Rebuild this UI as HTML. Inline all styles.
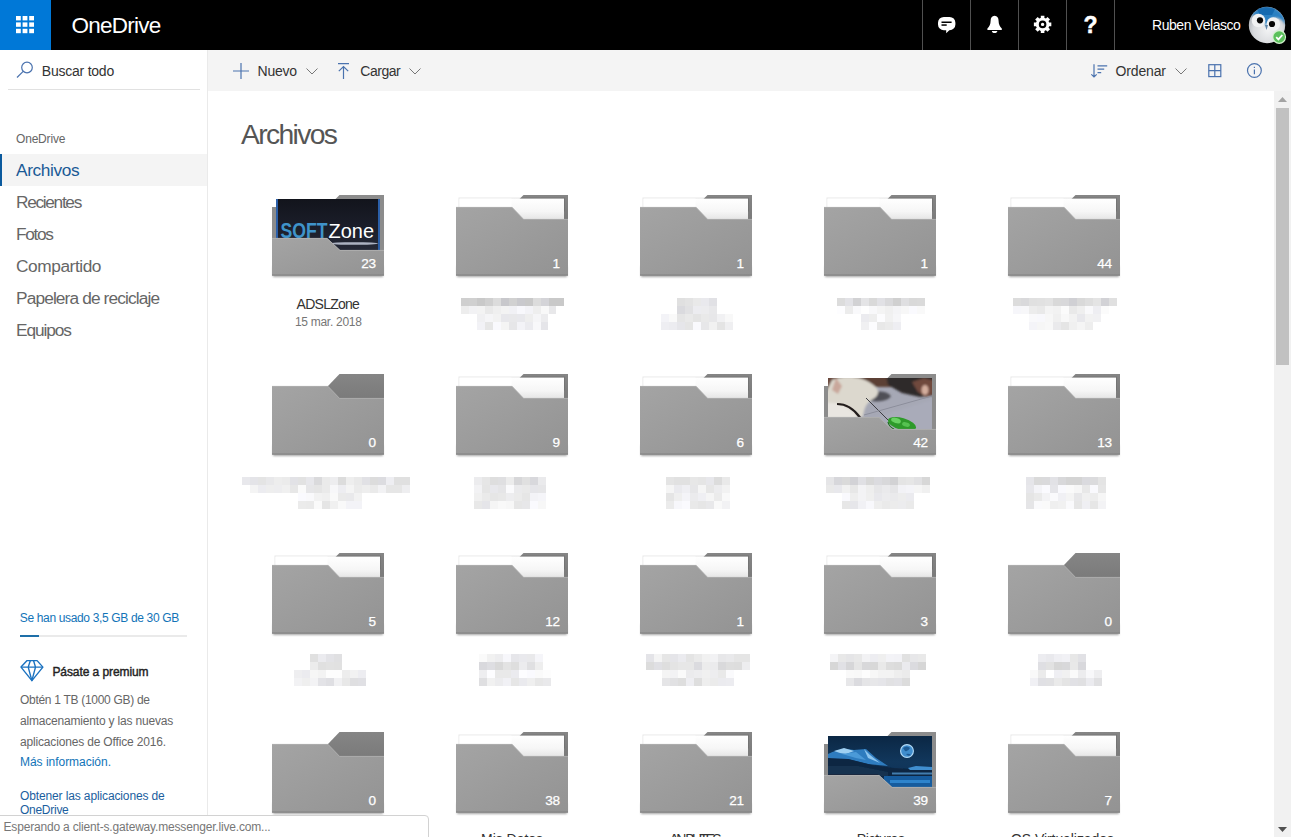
<!DOCTYPE html><html lang="es"><head><meta charset="utf-8"><title>Archivos - OneDrive</title><style>
*{box-sizing:border-box;margin:0;padding:0}
html,body{width:1291px;height:837px;overflow:hidden;background:#fff}
body{font-family:"Liberation Sans",sans-serif;position:relative;color:#333}
.abs{position:absolute}
.t{position:absolute;white-space:nowrap;line-height:1}
#hdr{position:absolute;left:0;top:0;width:1291px;height:50px;background:#000}
#waffle{position:absolute;left:0;top:0;width:51px;height:50px;background:#0078d7}
.div{position:absolute;top:0;width:1px;height:50px;background:#505050}
#side{position:absolute;left:0;top:50px;width:207px;height:787px;background:#fff}
#sideborder{position:absolute;left:207px;top:50px;width:1px;height:787px;background:#eaeaea}
#tool{position:absolute;left:208px;top:50px;width:1083px;height:41px;background:#f4f4f4}
#sb{position:absolute;left:1274px;top:91px;width:17px;height:746px;background:#f1f1f1}
#thumb{position:absolute;left:1276px;top:108px;width:13px;height:257px;background:#c1c1c1}
.nav{position:absolute;left:0;width:207px;height:32px}
.nav span{position:absolute;left:16px;top:7px;font-size:17px;line-height:20px;color:#555;white-space:nowrap}
.nav.sel{background:#f4f4f4;border-left:2px solid #0b5a9e}
.nav.sel span{left:13px;color:#1a5a96}
.folder{position:absolute;width:112px;height:80px;overflow:visible}
.cnt{position:absolute;right:8.300px;top:62.100px;font-size:13.600px;line-height:14px;color:#fff;white-space:nowrap;letter-spacing:-0.300px;-webkit-text-stroke:0.250px #fff}
.blk{position:absolute}
#status{position:absolute;left:-1px;top:815px;width:430px;height:23px;background:#fff;border:1px solid #d2d2d2;border-top-right-radius:4px}
</style></head><body>
<svg width="0" height="0" style="position:absolute"><defs>
<linearGradient id="gf" x1="0" y1="0" x2="1" y2="1"><stop offset="0" stop-color="#a4a4a4"/><stop offset="1" stop-color="#939393"/></linearGradient>
<linearGradient id="gp" x1="0" y1="0" x2="0" y2="1"><stop offset="0" stop-color="#ffffff"/><stop offset="0.6" stop-color="#f6f6f6"/><stop offset="1" stop-color="#e4e4e4"/></linearGradient>
<linearGradient id="gb" x1="0" y1="0" x2="0" y2="1"><stop offset="0" stop-color="#858585"/><stop offset="1" stop-color="#7a7a7a"/></linearGradient>
<linearGradient id="gsz" x1="0" y1="0" x2="0" y2="1"><stop offset="0" stop-color="#12141c"/><stop offset="0.6" stop-color="#1c1f2b"/><stop offset="1" stop-color="#262a38"/></linearGradient>
<linearGradient id="gmoon" x1="0" y1="0" x2="0" y2="1"><stop offset="0" stop-color="#0b2744"/><stop offset="0.5" stop-color="#11375c"/><stop offset="1" stop-color="#0e2f52"/></linearGradient>
<filter id="bl1" x="-20%" y="-20%" width="140%" height="140%"><feGaussianBlur stdDeviation="1.2"/></filter>
<filter id="bl2" x="-20%" y="-20%" width="140%" height="140%"><feGaussianBlur stdDeviation="0.6"/></filter>
<filter id="sh" x="-10%" y="-10%" width="120%" height="130%"><feGaussianBlur stdDeviation="1.3"/></filter>
</defs></svg>
<div id="hdr">
<div id="waffle"><svg class="abs" style="left:16px;top:16px" width="19" height="18" viewBox="0 0 19 18" fill="#fff"><rect x="0.0" y="0.0" width="4.800" height="4.400"/><rect x="6.6" y="0.0" width="4.800" height="4.400"/><rect x="13.2" y="0.0" width="4.800" height="4.400"/><rect x="0.0" y="6.4" width="4.800" height="4.400"/><rect x="6.6" y="6.4" width="4.800" height="4.400"/><rect x="13.2" y="6.4" width="4.800" height="4.400"/><rect x="0.0" y="12.8" width="4.800" height="4.400"/><rect x="6.6" y="12.8" width="4.800" height="4.400"/><rect x="13.2" y="12.8" width="4.800" height="4.400"/></svg></div>
<span class="t" style="left:71.6px;top:14.85px;font-size:22.5px;color:#fff;font-weight:400;letter-spacing:-0.766px;">OneDrive</span>
<div class="div" style="left:922px"></div>
<div class="div" style="left:970px"></div>
<div class="div" style="left:1018px"></div>
<div class="div" style="left:1066px"></div>
<div class="div" style="left:1114px"></div>
<svg class="abs" style="left:937px;top:16px" width="19" height="18" viewBox="0 0 19 18"><path d="M6.800 0.900h5.800A5.800 5.800 0 0 1 18.400 6.700v1.700A5.800 5.800 0 0 1 12.600 14.200H12.300L9.200 17.200V14.200H6.800A5.800 5.800 0 0 1 1 8.400V6.700A5.800 5.800 0 0 1 6.800 0.900z" fill="#fff"/><rect x="4.500" y="5.500" width="10.100" height="1.500" fill="#000"/><rect x="4.500" y="8.300" width="5.200" height="1.500" fill="#000"/></svg>
<svg class="abs" style="left:986px;top:15px" width="17" height="19" viewBox="0 0 17 19"><path d="M8.600 0.800c-2.700 0-4 2.200-4 5.200 0 3.400-1.300 5.600-3.200 7.600v1.400h14.400v-1.400c-1.900-2-3.200-4.200-3.200-7.600 0-3-1.300-5.200-4-5.200z" fill="#fff"/><path d="M5.900 15.900h5.400c0 1.300-1.200 2.100-2.700 2.100s-2.700-.8-2.700-2.100z" fill="#fff"/></svg>
<svg class="abs" style="left:1033px;top:15px" width="19" height="19" viewBox="0 0 19 19"><path d="M15.84 7.59L18.32 7.60L18.32 11.20L15.84 11.21L15.30 12.53L17.04 14.29L14.49 16.84L12.73 15.10L11.41 15.64L11.40 18.12L7.80 18.12L7.79 15.64L6.47 15.10L4.71 16.84L2.16 14.29L3.90 12.53L3.36 11.21L0.88 11.20L0.88 7.60L3.36 7.59L3.90 6.27L2.16 4.51L4.71 1.96L6.47 3.70L7.79 3.16L7.80 0.68L11.40 0.68L11.41 3.16L12.73 3.70L14.49 1.96L17.04 4.51L15.30 6.27Z" fill="#fff"/><circle cx="9.600" cy="9.400" r="6.600" fill="#fff"/><circle cx="9.600" cy="9.400" r="2.750" fill="none" stroke="#000" stroke-width="2.100"/></svg>
<span class="t" style="left:1083.5px;top:14.13px;font-size:23px;color:#fff;font-weight:700;letter-spacing:0px;-webkit-text-stroke:0.500px #fff;">?</span>
<span class="t" style="left:1152.0px;top:18.35px;font-size:14px;color:#fff;font-weight:400;letter-spacing:-0.44px;">Ruben Velasco</span>
<svg class="abs" style="left:1248px;top:6px" width="40" height="40" viewBox="0 0 40 40">
<defs><clipPath id="av"><circle cx="19" cy="19" r="18.200"/></clipPath>
<radialGradient id="avg" cx="0.5" cy="0.6" r="0.6"><stop offset="0" stop-color="#f2f3f4"/><stop offset="0.6" stop-color="#d9dbde"/><stop offset="1" stop-color="#9ea3aa"/></radialGradient></defs>
<g clip-path="url(#av)"><rect width="40" height="40" fill="url(#avg)"/>
<path d="M3 11C7 -2 32 -4 37.500 15L38 19C34 12 28 10 22 13L18.500 21 15 11C11 8 6 8 3 11Z" fill="#2b80c2" filter="url(#bl1)"/>
<path d="M9 3q9-4 18 0l-3 6h-12z" fill="#0d62a8" opacity="0.700" filter="url(#bl2)"/>
<circle cx="10.500" cy="14.500" r="6.800" fill="#f0f1f2"/><circle cx="25.300" cy="18" r="6.800" fill="#f0f1f2"/>
<circle cx="12" cy="14.300" r="3.100" fill="#060606"/><circle cx="24" cy="18" r="3.100" fill="#060606"/>
<path d="M17 19l1.500 5 1.500-5z" fill="#5c84a8"/>
</g>
<circle cx="31.200" cy="31" r="6.900" fill="#d4f2cf"/><circle cx="31.200" cy="31" r="5.800" fill="#5bc05b"/>
<path d="M28.200 31.200l2.200 2.200 3.900-4.400" fill="none" stroke="#fff" stroke-width="1.800"/></svg>
</div>
<div id="side"></div>
<div id="sideborder"></div>
<svg class="abs" style="left:16px;top:61px" width="18" height="18" viewBox="0 0 18 18" fill="none" stroke="#4a72ae" stroke-width="1.200"><circle cx="11" cy="6.500" r="5.300"/><path d="M7.200 10.300L1 16.500"/></svg>
<span class="t" style="left:41.8px;top:64.05px;font-size:14px;color:#333;font-weight:400;letter-spacing:-0.233px;">Buscar todo</span>
<div class="abs" style="left:8px;top:89px;width:192px;height:1px;background:#e1e1e1"></div>
<span class="t" style="left:16.0px;top:133.24px;font-size:12px;color:#666;font-weight:400;letter-spacing:-0.186px;">OneDrive</span>
<div class="nav sel" style="top:154px"></div>
<span class="t" style="left:16.0px;top:162.26px;font-size:17.3px;color:#1a5a96;font-weight:400;letter-spacing:-0.378px;">Archivos</span>
<span class="t" style="left:16.0px;top:194.26px;font-size:17.3px;color:#666;font-weight:400;letter-spacing:-1.318px;">Recientes</span>
<span class="t" style="left:16.0px;top:226.26px;font-size:17.3px;color:#666;font-weight:400;letter-spacing:-1.312px;">Fotos</span>
<span class="t" style="left:16.0px;top:258.26px;font-size:17.3px;color:#666;font-weight:400;letter-spacing:-0.427px;">Compartido</span>
<span class="t" style="left:16.0px;top:290.26px;font-size:17.3px;color:#666;font-weight:400;letter-spacing:-0.869px;">Papelera de reciclaje</span>
<span class="t" style="left:16.0px;top:322.26px;font-size:17.3px;color:#666;font-weight:400;letter-spacing:-1.09px;">Equipos</span>
<span class="t" style="left:19.8px;top:611.84px;font-size:12px;color:#1274b8;font-weight:400;letter-spacing:-0.347px;">Se han usado 3,5 GB de 30 GB</span>
<div class="abs" style="left:20px;top:634.5px;width:167px;height:2px;background:#eaeaea"></div>
<div class="abs" style="left:20px;top:634.5px;width:19px;height:2px;background:#1e6fa8"></div>
<svg class="abs" style="left:20px;top:659px" width="25" height="23" viewBox="-1 -1 25 23" fill="none" stroke="#1b72c0" stroke-width="1.400" stroke-linejoin="round"><path d="M6.100 0.600h10L21.900 7.100 10.900 20.600 0 7.100z"/><path d="M0 7.100h21.900M9.300 0.800L7.200 7.100l3.700 13.500 3.600-13.500-1.900-6.300"/></svg>
<span class="t" style="left:52.4px;top:666.24px;font-size:12px;color:#222;font-weight:400;letter-spacing:-0.079px;-webkit-text-stroke:0.400px #222;">Pásate a premium</span>
<span class="t" style="left:20.0px;top:693.84px;font-size:12px;color:#666;font-weight:400;letter-spacing:-0.297px;">Obtén 1 TB (1000 GB) de</span>
<span class="t" style="left:20.0px;top:714.84px;font-size:12px;color:#666;font-weight:400;letter-spacing:-0.185px;">almacenamiento y las nuevas</span>
<span class="t" style="left:20.0px;top:735.64px;font-size:12px;color:#666;font-weight:400;letter-spacing:-0.168px;">aplicaciones de Office 2016.</span>
<span class="t" style="left:20.0px;top:755.64px;font-size:12px;color:#1274b8;font-weight:400;letter-spacing:-0.025px;">Más información.</span>
<span class="t" style="left:20.0px;top:790.44px;font-size:12px;color:#1b5e9e;font-weight:400;letter-spacing:-0.127px;">Obtener las aplicaciones de</span>
<span class="t" style="left:20.0px;top:804.44px;font-size:12px;color:#1b5e9e;font-weight:400;letter-spacing:-0.271px;">OneDrive</span>
<div id="tool"></div>
<svg class="abs" style="left:233px;top:63px" width="16" height="16" viewBox="0 0 16 16" stroke="#4a72ae" stroke-width="1.200" fill="none"><path d="M8 0v16M0 8h16"/></svg>
<span class="t" style="left:257.6px;top:63.95px;font-size:14px;color:#333;font-weight:400;letter-spacing:-0.265px;">Nuevo</span>
<svg class="abs" style="left:306px;top:68px" width="12" height="7" viewBox="0 0 12 7" fill="none" stroke="#777" stroke-width="1"><path d="M0.500 0.500L6 6l5.500-5.500"/></svg>
<svg class="abs" style="left:338px;top:63px" width="11" height="16" viewBox="0 0 11 16" stroke="#4a72ae" stroke-width="1.200" fill="none"><path d="M0 0.600h11M5.500 3.500v12.500M0.800 8.200L5.500 3.500l4.700 4.700"/></svg>
<span class="t" style="left:360.3px;top:63.95px;font-size:14px;color:#333;font-weight:400;letter-spacing:-0.461px;">Cargar</span>
<svg class="abs" style="left:409px;top:68px" width="12" height="7" viewBox="0 0 12 7" fill="none" stroke="#777" stroke-width="1"><path d="M0.500 0.500L6 6l5.500-5.500"/></svg>
<svg class="abs" style="left:1091px;top:63px" width="17" height="15" viewBox="0 0 17 15" stroke="#4a72ae" stroke-width="1.200" fill="none"><path d="M3 1.300v12.700M0.300 11.300L3 14l2.700-2.700M6.500 2.800h9.700M6.500 6.200h6.700M6.500 9.600h3.700"/></svg>
<span class="t" style="left:1115.6px;top:63.95px;font-size:14px;color:#333;font-weight:400;letter-spacing:-0.174px;">Ordenar</span>
<svg class="abs" style="left:1175px;top:68px" width="12" height="7" viewBox="0 0 12 7" fill="none" stroke="#777" stroke-width="1"><path d="M0.500 0.500L6 6l5.500-5.500"/></svg>
<svg class="abs" style="left:1208px;top:64px" width="14" height="14" viewBox="0 0 14 14" stroke="#4a72ae" stroke-width="1.200" fill="none"><rect x="0.800" y="0.700" width="12" height="11.900"/><path d="M6.800 0.700v11.900M0.800 6.650h12"/></svg>
<svg class="abs" style="left:1246px;top:62px" width="17" height="17" viewBox="0 0 17 17" stroke="#4a72ae" stroke-width="1.200" fill="none"><circle cx="8.400" cy="8.500" r="6.900"/><path d="M8.400 7.400v4.800M8.400 4.800v1.300"/></svg>
<h1 class="t" style="left:240.9px;top:120.34px;font-size:28.3px;color:#555;font-weight:400;letter-spacing:-1.633px;font-weight:400;">Archivos</h1>
<div class="folder" style="left:272px;top:195px"><svg width="112" height="84" viewBox="0 0 112 84" style="position:absolute;left:0;top:0;overflow:visible"><rect x="1" y="71" width="110" height="11" fill="#000" opacity="0.35" filter="url(#sh)"/><path d="M0 12H55.500L67.500 0H112V60H0Z" fill="#8c8c8c"/><rect x="2" y="2" width="108" height="10" fill="#fff" opacity="0.0"/><svg x="4" y="4" width="104" height="52" viewBox="0 0 104 52" overflow="hidden"><rect width="104" height="52" fill="url(#gsz)"/><rect x="0" y="0" width="2" height="52" fill="#2b5fa8"/><rect x="102" y="0" width="2" height="52" fill="#2b5fa8"/><ellipse cx="78" cy="44.500" rx="24" ry="1.300" fill="#cfd6e6" opacity="0.8" filter="url(#bl2)"/><text x="4.500" y="38.500" font-family="Liberation Sans, sans-serif" font-weight="700" font-size="22.600" fill="#3f93c9" textLength="47" lengthAdjust="spacingAndGlyphs">SOFT</text><text x="52.500" y="38.500" font-family="Liberation Sans, sans-serif" font-size="20.500" fill="#fff" textLength="45.500" lengthAdjust="spacingAndGlyphs">Zone</text></svg><path d="M0 43H55L68 55H112V80.600H0Z" fill="url(#gf)"/><path d="M0 43.400H55L68 55.400H112" fill="none" stroke="#b4b4b4" stroke-width="0.800"/><rect x="0" y="79.500" width="112" height="1.100" fill="#828282"/></svg><span class="cnt">23</span></div>
<div class="folder" style="left:456px;top:195px"><svg width="112" height="84" viewBox="0 0 112 84" style="position:absolute;left:0;top:0;overflow:visible"><rect x="1" y="71" width="110" height="11" fill="#000" opacity="0.35" filter="url(#sh)"/><path d="M67.500 0H112V26H56V11.500Z" fill="url(#gb)"/><rect x="2.500" y="2.500" width="106.500" height="14" fill="#000" opacity="0.090" filter="url(#bl2)"/><rect x="3.500" y="3.600" width="104.500" height="21.400" fill="url(#gp)"/><rect x="3.500" y="3.600" width="52" height="9.400" fill="#fff"/><path d="M0 12H56L67.500 24H112V80.600H0Z" fill="url(#gf)"/><path d="M0 12.400H56L67.500 24.400H112" fill="none" stroke="#b0b0b0" stroke-width="0.800"/><rect x="0" y="79.500" width="112" height="1.100" fill="#828282"/></svg><span class="cnt">1</span></div>
<div class="folder" style="left:640px;top:195px"><svg width="112" height="84" viewBox="0 0 112 84" style="position:absolute;left:0;top:0;overflow:visible"><rect x="1" y="71" width="110" height="11" fill="#000" opacity="0.35" filter="url(#sh)"/><path d="M67.500 0H112V26H56V11.500Z" fill="url(#gb)"/><rect x="2.500" y="2.500" width="106.500" height="14" fill="#000" opacity="0.090" filter="url(#bl2)"/><rect x="3.500" y="3.600" width="104.500" height="21.400" fill="url(#gp)"/><rect x="3.500" y="3.600" width="52" height="9.400" fill="#fff"/><path d="M0 12H56L67.500 24H112V80.600H0Z" fill="url(#gf)"/><path d="M0 12.400H56L67.500 24.400H112" fill="none" stroke="#b0b0b0" stroke-width="0.800"/><rect x="0" y="79.500" width="112" height="1.100" fill="#828282"/></svg><span class="cnt">1</span></div>
<div class="folder" style="left:824px;top:195px"><svg width="112" height="84" viewBox="0 0 112 84" style="position:absolute;left:0;top:0;overflow:visible"><rect x="1" y="71" width="110" height="11" fill="#000" opacity="0.35" filter="url(#sh)"/><path d="M67.500 0H112V26H56V11.500Z" fill="url(#gb)"/><rect x="2.500" y="2.500" width="106.500" height="14" fill="#000" opacity="0.090" filter="url(#bl2)"/><rect x="3.500" y="3.600" width="104.500" height="21.400" fill="url(#gp)"/><rect x="3.500" y="3.600" width="52" height="9.400" fill="#fff"/><path d="M0 12H56L67.500 24H112V80.600H0Z" fill="url(#gf)"/><path d="M0 12.400H56L67.500 24.400H112" fill="none" stroke="#b0b0b0" stroke-width="0.800"/><rect x="0" y="79.500" width="112" height="1.100" fill="#828282"/></svg><span class="cnt">1</span></div>
<div class="folder" style="left:1008px;top:195px"><svg width="112" height="84" viewBox="0 0 112 84" style="position:absolute;left:0;top:0;overflow:visible"><rect x="1" y="71" width="110" height="11" fill="#000" opacity="0.35" filter="url(#sh)"/><path d="M67.500 0H112V26H56V11.500Z" fill="url(#gb)"/><rect x="2.500" y="2.500" width="106.500" height="14" fill="#000" opacity="0.090" filter="url(#bl2)"/><rect x="3.500" y="3.600" width="104.500" height="21.400" fill="url(#gp)"/><rect x="3.500" y="3.600" width="52" height="9.400" fill="#fff"/><path d="M0 12H56L67.500 24H112V80.600H0Z" fill="url(#gf)"/><path d="M0 12.400H56L67.500 24.400H112" fill="none" stroke="#b0b0b0" stroke-width="0.800"/><rect x="0" y="79.500" width="112" height="1.100" fill="#828282"/></svg><span class="cnt">44</span></div>
<div class="folder" style="left:272px;top:374px"><svg width="112" height="84" viewBox="0 0 112 84" style="position:absolute;left:0;top:0;overflow:visible"><rect x="1" y="71" width="110" height="11" fill="#000" opacity="0.35" filter="url(#sh)"/><path d="M67.500 0H112V26H56V12Z" fill="url(#gb)"/><path d="M0 12H56L67.500 24H112V80.600H0Z" fill="url(#gf)"/><path d="M0 12.400H56L67.500 24.400H112" fill="none" stroke="#b0b0b0" stroke-width="0.800"/><rect x="0" y="79.500" width="112" height="1.100" fill="#828282"/></svg><span class="cnt">0</span></div>
<div class="folder" style="left:456px;top:374px"><svg width="112" height="84" viewBox="0 0 112 84" style="position:absolute;left:0;top:0;overflow:visible"><rect x="1" y="71" width="110" height="11" fill="#000" opacity="0.35" filter="url(#sh)"/><path d="M67.500 0H112V26H56V11.500Z" fill="url(#gb)"/><rect x="2.500" y="2.500" width="106.500" height="14" fill="#000" opacity="0.090" filter="url(#bl2)"/><rect x="3.500" y="3.600" width="104.500" height="21.400" fill="url(#gp)"/><rect x="3.500" y="3.600" width="52" height="9.400" fill="#fff"/><path d="M0 12H56L67.500 24H112V80.600H0Z" fill="url(#gf)"/><path d="M0 12.400H56L67.500 24.400H112" fill="none" stroke="#b0b0b0" stroke-width="0.800"/><rect x="0" y="79.500" width="112" height="1.100" fill="#828282"/></svg><span class="cnt">9</span></div>
<div class="folder" style="left:640px;top:374px"><svg width="112" height="84" viewBox="0 0 112 84" style="position:absolute;left:0;top:0;overflow:visible"><rect x="1" y="71" width="110" height="11" fill="#000" opacity="0.35" filter="url(#sh)"/><path d="M67.500 0H112V26H56V11.500Z" fill="url(#gb)"/><rect x="2.500" y="2.500" width="106.500" height="14" fill="#000" opacity="0.090" filter="url(#bl2)"/><rect x="3.500" y="3.600" width="104.500" height="21.400" fill="url(#gp)"/><rect x="3.500" y="3.600" width="52" height="9.400" fill="#fff"/><path d="M0 12H56L67.500 24H112V80.600H0Z" fill="url(#gf)"/><path d="M0 12.400H56L67.500 24.400H112" fill="none" stroke="#b0b0b0" stroke-width="0.800"/><rect x="0" y="79.500" width="112" height="1.100" fill="#828282"/></svg><span class="cnt">6</span></div>
<div class="folder" style="left:824px;top:374px"><svg width="112" height="84" viewBox="0 0 112 84" style="position:absolute;left:0;top:0;overflow:visible"><rect x="1" y="71" width="110" height="11" fill="#000" opacity="0.35" filter="url(#sh)"/><path d="M0 12H55.500L67.500 0H112V60H0Z" fill="#8c8c8c"/><rect x="2" y="2" width="108" height="10" fill="#fff" opacity="0.0"/><svg x="4" y="4" width="104" height="52" viewBox="0 0 104 52" overflow="hidden"><rect width="104" height="52" fill="#a6a8b5"/><g filter="url(#bl1)"><rect x="-3" y="-3" width="70" height="12" fill="#5b3f34"/><path d="M58 -3H108V17L92 19 74 15 60 7Z" fill="#2f2b2c"/><path d="M84 4l12-4 12 3v12l-10 4-8-5z" fill="#70493c"/><ellipse cx="97" cy="12" rx="3.500" ry="5" fill="#d3ad9d"/><path d="M36 19c8-7 22-7 27-1-3 6-20 8-27 1z" fill="#4f4f56"/><path d="M-3 -3H4L8 3 0 16-3 16Z" fill="#6b4a3d"/><path d="M4 2C14 -3 32 -3 44 6c8 5 8 11 1 15-7 4-9 10-10 18L-3 40V16Z" fill="#dcd8ce"/><path d="M8 0l6 8-4 8-6-4z" fill="#c9a79b"/><path d="M-3 25c12-1 26 3 33 16H-3Z" fill="#e9e6e1"/><path d="M44 40L104 22V54H40Z" fill="#a9abb9"/></g><path d="M9 26c9 0 17 5 23 13.500" stroke="#241d1b" stroke-width="2.200" fill="none" filter="url(#bl2)"/><path d="M38 20L63 45" stroke="#3c3c42" stroke-width="1" filter="url(#bl2)"/><path d="M36 37L104 18" stroke="#8c8e9b" stroke-width="1" filter="url(#bl2)"/><g filter="url(#bl2)"><ellipse cx="74" cy="46" rx="14.500" ry="6" transform="rotate(16 74 46)" fill="#2e9a2b"/><ellipse cx="68" cy="42.500" rx="5" ry="2.600" transform="rotate(16 68 42.500)" fill="#69d163"/><ellipse cx="78" cy="46.500" rx="4" ry="2.200" transform="rotate(16 78 46.500)" fill="#57c251"/><path d="M60 44q1 5 6 7" stroke="#1d6e1c" stroke-width="1.200" fill="none"/></g></svg><path d="M0 43H55L68 55H112V80.600H0Z" fill="url(#gf)"/><path d="M0 43.400H55L68 55.400H112" fill="none" stroke="#b4b4b4" stroke-width="0.800"/><rect x="0" y="79.500" width="112" height="1.100" fill="#828282"/></svg><span class="cnt">42</span></div>
<div class="folder" style="left:1008px;top:374px"><svg width="112" height="84" viewBox="0 0 112 84" style="position:absolute;left:0;top:0;overflow:visible"><rect x="1" y="71" width="110" height="11" fill="#000" opacity="0.35" filter="url(#sh)"/><path d="M67.500 0H112V26H56V11.500Z" fill="url(#gb)"/><rect x="2.500" y="2.500" width="106.500" height="14" fill="#000" opacity="0.090" filter="url(#bl2)"/><rect x="3.500" y="3.600" width="104.500" height="21.400" fill="url(#gp)"/><rect x="3.500" y="3.600" width="52" height="9.400" fill="#fff"/><path d="M0 12H56L67.500 24H112V80.600H0Z" fill="url(#gf)"/><path d="M0 12.400H56L67.500 24.400H112" fill="none" stroke="#b0b0b0" stroke-width="0.800"/><rect x="0" y="79.500" width="112" height="1.100" fill="#828282"/></svg><span class="cnt">13</span></div>
<div class="folder" style="left:272px;top:553px"><svg width="112" height="84" viewBox="0 0 112 84" style="position:absolute;left:0;top:0;overflow:visible"><rect x="1" y="71" width="110" height="11" fill="#000" opacity="0.35" filter="url(#sh)"/><path d="M67.500 0H112V26H56V11.500Z" fill="url(#gb)"/><rect x="2.500" y="2.500" width="106.500" height="14" fill="#000" opacity="0.090" filter="url(#bl2)"/><rect x="3.500" y="3.600" width="104.500" height="21.400" fill="url(#gp)"/><rect x="3.500" y="3.600" width="52" height="9.400" fill="#fff"/><path d="M0 12H56L67.500 24H112V80.600H0Z" fill="url(#gf)"/><path d="M0 12.400H56L67.500 24.400H112" fill="none" stroke="#b0b0b0" stroke-width="0.800"/><rect x="0" y="79.500" width="112" height="1.100" fill="#828282"/></svg><span class="cnt">5</span></div>
<div class="folder" style="left:456px;top:553px"><svg width="112" height="84" viewBox="0 0 112 84" style="position:absolute;left:0;top:0;overflow:visible"><rect x="1" y="71" width="110" height="11" fill="#000" opacity="0.35" filter="url(#sh)"/><path d="M67.500 0H112V26H56V11.500Z" fill="url(#gb)"/><rect x="2.500" y="2.500" width="106.500" height="14" fill="#000" opacity="0.090" filter="url(#bl2)"/><rect x="3.500" y="3.600" width="104.500" height="21.400" fill="url(#gp)"/><rect x="3.500" y="3.600" width="52" height="9.400" fill="#fff"/><path d="M0 12H56L67.500 24H112V80.600H0Z" fill="url(#gf)"/><path d="M0 12.400H56L67.500 24.400H112" fill="none" stroke="#b0b0b0" stroke-width="0.800"/><rect x="0" y="79.500" width="112" height="1.100" fill="#828282"/></svg><span class="cnt">12</span></div>
<div class="folder" style="left:640px;top:553px"><svg width="112" height="84" viewBox="0 0 112 84" style="position:absolute;left:0;top:0;overflow:visible"><rect x="1" y="71" width="110" height="11" fill="#000" opacity="0.35" filter="url(#sh)"/><path d="M67.500 0H112V26H56V11.500Z" fill="url(#gb)"/><rect x="2.500" y="2.500" width="106.500" height="14" fill="#000" opacity="0.090" filter="url(#bl2)"/><rect x="3.500" y="3.600" width="104.500" height="21.400" fill="url(#gp)"/><rect x="3.500" y="3.600" width="52" height="9.400" fill="#fff"/><path d="M0 12H56L67.500 24H112V80.600H0Z" fill="url(#gf)"/><path d="M0 12.400H56L67.500 24.400H112" fill="none" stroke="#b0b0b0" stroke-width="0.800"/><rect x="0" y="79.500" width="112" height="1.100" fill="#828282"/></svg><span class="cnt">1</span></div>
<div class="folder" style="left:824px;top:553px"><svg width="112" height="84" viewBox="0 0 112 84" style="position:absolute;left:0;top:0;overflow:visible"><rect x="1" y="71" width="110" height="11" fill="#000" opacity="0.35" filter="url(#sh)"/><path d="M67.500 0H112V26H56V11.500Z" fill="url(#gb)"/><rect x="2.500" y="2.500" width="106.500" height="14" fill="#000" opacity="0.090" filter="url(#bl2)"/><rect x="3.500" y="3.600" width="104.500" height="21.400" fill="url(#gp)"/><rect x="3.500" y="3.600" width="52" height="9.400" fill="#fff"/><path d="M0 12H56L67.500 24H112V80.600H0Z" fill="url(#gf)"/><path d="M0 12.400H56L67.500 24.400H112" fill="none" stroke="#b0b0b0" stroke-width="0.800"/><rect x="0" y="79.500" width="112" height="1.100" fill="#828282"/></svg><span class="cnt">3</span></div>
<div class="folder" style="left:1008px;top:553px"><svg width="112" height="84" viewBox="0 0 112 84" style="position:absolute;left:0;top:0;overflow:visible"><rect x="1" y="71" width="110" height="11" fill="#000" opacity="0.35" filter="url(#sh)"/><path d="M67.500 0H112V26H56V12Z" fill="url(#gb)"/><path d="M0 12H56L67.500 24H112V80.600H0Z" fill="url(#gf)"/><path d="M0 12.400H56L67.500 24.400H112" fill="none" stroke="#b0b0b0" stroke-width="0.800"/><rect x="0" y="79.500" width="112" height="1.100" fill="#828282"/></svg><span class="cnt">0</span></div>
<div class="folder" style="left:272px;top:732px"><svg width="112" height="84" viewBox="0 0 112 84" style="position:absolute;left:0;top:0;overflow:visible"><rect x="1" y="71" width="110" height="11" fill="#000" opacity="0.35" filter="url(#sh)"/><path d="M67.500 0H112V26H56V12Z" fill="url(#gb)"/><path d="M0 12H56L67.500 24H112V80.600H0Z" fill="url(#gf)"/><path d="M0 12.400H56L67.500 24.400H112" fill="none" stroke="#b0b0b0" stroke-width="0.800"/><rect x="0" y="79.500" width="112" height="1.100" fill="#828282"/></svg><span class="cnt">0</span></div>
<div class="folder" style="left:456px;top:732px"><svg width="112" height="84" viewBox="0 0 112 84" style="position:absolute;left:0;top:0;overflow:visible"><rect x="1" y="71" width="110" height="11" fill="#000" opacity="0.35" filter="url(#sh)"/><path d="M67.500 0H112V26H56V11.500Z" fill="url(#gb)"/><rect x="2.500" y="2.500" width="106.500" height="14" fill="#000" opacity="0.090" filter="url(#bl2)"/><rect x="3.500" y="3.600" width="104.500" height="21.400" fill="url(#gp)"/><rect x="3.500" y="3.600" width="52" height="9.400" fill="#fff"/><path d="M0 12H56L67.500 24H112V80.600H0Z" fill="url(#gf)"/><path d="M0 12.400H56L67.500 24.400H112" fill="none" stroke="#b0b0b0" stroke-width="0.800"/><rect x="0" y="79.500" width="112" height="1.100" fill="#828282"/></svg><span class="cnt">38</span></div>
<div class="folder" style="left:640px;top:732px"><svg width="112" height="84" viewBox="0 0 112 84" style="position:absolute;left:0;top:0;overflow:visible"><rect x="1" y="71" width="110" height="11" fill="#000" opacity="0.35" filter="url(#sh)"/><path d="M67.500 0H112V26H56V11.500Z" fill="url(#gb)"/><rect x="2.500" y="2.500" width="106.500" height="14" fill="#000" opacity="0.090" filter="url(#bl2)"/><rect x="3.500" y="3.600" width="104.500" height="21.400" fill="url(#gp)"/><rect x="3.500" y="3.600" width="52" height="9.400" fill="#fff"/><path d="M0 12H56L67.500 24H112V80.600H0Z" fill="url(#gf)"/><path d="M0 12.400H56L67.500 24.400H112" fill="none" stroke="#b0b0b0" stroke-width="0.800"/><rect x="0" y="79.500" width="112" height="1.100" fill="#828282"/></svg><span class="cnt">21</span></div>
<div class="folder" style="left:824px;top:732px"><svg width="112" height="84" viewBox="0 0 112 84" style="position:absolute;left:0;top:0;overflow:visible"><rect x="1" y="71" width="110" height="11" fill="#000" opacity="0.35" filter="url(#sh)"/><path d="M0 12H55.500L67.500 0H112V60H0Z" fill="#8c8c8c"/><rect x="2" y="2" width="108" height="10" fill="#fff" opacity="0.0"/><svg x="4" y="4" width="104" height="52" viewBox="0 0 104 52" overflow="hidden"><rect width="104" height="52" fill="url(#gmoon)"/><g filter="url(#bl2)"><path d="M0 18C8 14 16 12 26 14L38 13 48 22 60 30 40 28 20 23 0 23Z" fill="#2f7cbf"/><path d="M6 15l10-3 10 3-8 3-6-1z" fill="#9fd0f2"/><path d="M36 13l6 6 10 8-12-5z" fill="#8cc4ee"/><path d="M14 18l14-2 10 8-10-2z" fill="#4c9ad8"/><path d="M0 22L20 23 44 29 66 32 104 34V41H0Z" fill="#0d2643"/><path d="M0 30L30 30 60 36 60 40 0 40Z" fill="#15324f"/><path d="M0 38H50L62 52H0Z" fill="#0a1e36"/><path d="M80 32l8-2 16 1v3H82z" fill="#3f8fd0"/><rect x="56" y="40" width="48" height="12" fill="#185c9e"/><rect x="62" y="44" width="40" height="3" fill="#2f84cc"/><rect x="64" y="36.500" width="40" height="2" fill="#5aa2dc" opacity="0.700"/></g><circle cx="79" cy="15" r="6.600" fill="#3f8ccc"/><circle cx="79" cy="15" r="6.400" fill="none" stroke="#b4daf5" stroke-width="1.100"/><path d="M75 12q4-3 7 0-2 4-5 3zM78 18q3-1 5 1-3 2-5-1z" fill="#1d5a94" filter="url(#bl2)"/></svg><path d="M0 43H55L68 55H112V80.600H0Z" fill="url(#gf)"/><path d="M0 43.400H55L68 55.400H112" fill="none" stroke="#b4b4b4" stroke-width="0.800"/><rect x="0" y="79.500" width="112" height="1.100" fill="#828282"/></svg><span class="cnt">39</span></div>
<div class="folder" style="left:1008px;top:732px"><svg width="112" height="84" viewBox="0 0 112 84" style="position:absolute;left:0;top:0;overflow:visible"><rect x="1" y="71" width="110" height="11" fill="#000" opacity="0.35" filter="url(#sh)"/><path d="M67.500 0H112V26H56V11.500Z" fill="url(#gb)"/><rect x="2.500" y="2.500" width="106.500" height="14" fill="#000" opacity="0.090" filter="url(#bl2)"/><rect x="3.500" y="3.600" width="104.500" height="21.400" fill="url(#gp)"/><rect x="3.500" y="3.600" width="52" height="9.400" fill="#fff"/><path d="M0 12H56L67.500 24H112V80.600H0Z" fill="url(#gf)"/><path d="M0 12.400H56L67.500 24.400H112" fill="none" stroke="#b0b0b0" stroke-width="0.800"/><rect x="0" y="79.500" width="112" height="1.100" fill="#828282"/></svg><span class="cnt">7</span></div>
<span class="t" style="left:296.6px;top:296.95px;font-size:14px;color:#333;font-weight:400;letter-spacing:-0.742px;">ADSLZone</span>
<span class="t" style="left:294.9px;top:316.24px;font-size:12px;color:#767676;font-weight:400;letter-spacing:-0.277px;">15 mar. 2018</span>
<div aria-hidden="true"><i class="blk" style="left:461px;top:298px;width:8px;height:8px;background:rgb(207,207,207)"></i><i class="blk" style="left:469px;top:298px;width:8px;height:8px;background:rgb(208,208,208)"></i><i class="blk" style="left:477px;top:298px;width:8px;height:8px;background:rgb(201,201,201)"></i><i class="blk" style="left:485px;top:298px;width:8px;height:8px;background:rgb(208,208,208)"></i><i class="blk" style="left:493px;top:298px;width:8px;height:8px;background:rgb(220,220,220)"></i><i class="blk" style="left:501px;top:298px;width:8px;height:8px;background:rgb(200,200,204)"></i><i class="blk" style="left:509px;top:298px;width:8px;height:8px;background:rgb(209,209,209)"></i><i class="blk" style="left:517px;top:298px;width:8px;height:8px;background:rgb(201,201,205)"></i><i class="blk" style="left:525px;top:298px;width:8px;height:8px;background:rgb(201,201,201)"></i><i class="blk" style="left:533px;top:298px;width:8px;height:8px;background:rgb(220,220,220)"></i><i class="blk" style="left:541px;top:298px;width:8px;height:8px;background:rgb(212,212,216)"></i><i class="blk" style="left:549px;top:298px;width:8px;height:8px;background:rgb(201,201,201)"></i><i class="blk" style="left:557px;top:298px;width:7px;height:8px;background:rgb(201,201,201)"></i><i class="blk" style="left:461px;top:306px;width:8px;height:8px;background:rgb(237,237,237)"></i><i class="blk" style="left:469px;top:306px;width:8px;height:8px;background:rgb(242,242,244)"></i><i class="blk" style="left:477px;top:306px;width:8px;height:8px;background:rgb(243,243,243)"></i><i class="blk" style="left:485px;top:306px;width:8px;height:8px;background:rgb(233,233,233)"></i><i class="blk" style="left:493px;top:306px;width:8px;height:8px;background:rgb(239,239,239)"></i><i class="blk" style="left:501px;top:306px;width:8px;height:8px;background:rgb(243,243,243)"></i><i class="blk" style="left:509px;top:306px;width:8px;height:8px;background:rgb(241,241,245)"></i><i class="blk" style="left:517px;top:306px;width:8px;height:8px;background:rgb(248,248,252)"></i><i class="blk" style="left:525px;top:306px;width:8px;height:8px;background:rgb(243,243,247)"></i><i class="blk" style="left:533px;top:306px;width:8px;height:8px;background:rgb(238,238,238)"></i><i class="blk" style="left:541px;top:306px;width:8px;height:8px;background:rgb(248,248,248)"></i><i class="blk" style="left:549px;top:306px;width:7px;height:8px;background:rgb(232,232,234)"></i><i class="blk" style="left:477px;top:314px;width:8px;height:8px;background:rgb(240,240,242)"></i><i class="blk" style="left:485px;top:314px;width:8px;height:8px;background:rgb(245,245,247)"></i><i class="blk" style="left:493px;top:314px;width:8px;height:8px;background:rgb(242,242,242)"></i><i class="blk" style="left:501px;top:314px;width:8px;height:8px;background:rgb(231,231,235)"></i><i class="blk" style="left:509px;top:314px;width:8px;height:8px;background:rgb(232,232,234)"></i><i class="blk" style="left:517px;top:314px;width:8px;height:8px;background:rgb(232,232,236)"></i><i class="blk" style="left:525px;top:314px;width:8px;height:8px;background:rgb(238,238,238)"></i><i class="blk" style="left:533px;top:314px;width:8px;height:8px;background:rgb(245,245,247)"></i><i class="blk" style="left:541px;top:314px;width:7px;height:8px;background:rgb(236,236,238)"></i><i class="blk" style="left:477px;top:322px;width:8px;height:8px;background:rgb(242,242,246)"></i><i class="blk" style="left:485px;top:322px;width:8px;height:8px;background:rgb(230,230,230)"></i><i class="blk" style="left:493px;top:322px;width:8px;height:8px;background:rgb(249,249,253)"></i><i class="blk" style="left:501px;top:322px;width:8px;height:8px;background:rgb(244,244,244)"></i><i class="blk" style="left:509px;top:322px;width:8px;height:8px;background:rgb(230,230,232)"></i><i class="blk" style="left:517px;top:322px;width:8px;height:8px;background:rgb(243,243,247)"></i><i class="blk" style="left:525px;top:322px;width:8px;height:8px;background:rgb(235,235,239)"></i><i class="blk" style="left:533px;top:322px;width:8px;height:8px;background:rgb(248,248,250)"></i><i class="blk" style="left:541px;top:322px;width:7px;height:8px;background:rgb(229,229,233)"></i><i class="blk" style="left:677px;top:298px;width:8px;height:8px;background:rgb(224,224,224)"></i><i class="blk" style="left:685px;top:298px;width:8px;height:8px;background:rgb(227,227,227)"></i><i class="blk" style="left:693px;top:298px;width:8px;height:8px;background:rgb(233,233,233)"></i><i class="blk" style="left:701px;top:298px;width:8px;height:8px;background:rgb(233,233,237)"></i><i class="blk" style="left:709px;top:298px;width:8px;height:8px;background:rgb(225,225,229)"></i><i class="blk" style="left:677px;top:306px;width:8px;height:8px;background:rgb(218,218,222)"></i><i class="blk" style="left:685px;top:306px;width:8px;height:8px;background:rgb(225,225,227)"></i><i class="blk" style="left:693px;top:306px;width:8px;height:8px;background:rgb(236,236,240)"></i><i class="blk" style="left:701px;top:306px;width:8px;height:8px;background:rgb(236,236,238)"></i><i class="blk" style="left:709px;top:306px;width:8px;height:8px;background:rgb(232,232,234)"></i><i class="blk" style="left:661px;top:314px;width:8px;height:8px;background:rgb(243,243,247)"></i><i class="blk" style="left:669px;top:314px;width:8px;height:8px;background:rgb(249,249,249)"></i><i class="blk" style="left:677px;top:314px;width:8px;height:8px;background:rgb(229,229,229)"></i><i class="blk" style="left:685px;top:314px;width:8px;height:8px;background:rgb(233,233,233)"></i><i class="blk" style="left:693px;top:314px;width:8px;height:8px;background:rgb(228,228,228)"></i><i class="blk" style="left:701px;top:314px;width:8px;height:8px;background:rgb(233,233,233)"></i><i class="blk" style="left:709px;top:314px;width:8px;height:8px;background:rgb(231,231,233)"></i><i class="blk" style="left:717px;top:314px;width:8px;height:8px;background:rgb(241,241,243)"></i><i class="blk" style="left:725px;top:314px;width:8px;height:8px;background:rgb(248,248,248)"></i><i class="blk" style="left:661px;top:322px;width:8px;height:8px;background:rgb(238,238,242)"></i><i class="blk" style="left:669px;top:322px;width:8px;height:8px;background:rgb(236,236,240)"></i><i class="blk" style="left:677px;top:322px;width:8px;height:8px;background:rgb(230,230,234)"></i><i class="blk" style="left:685px;top:322px;width:8px;height:8px;background:rgb(229,229,229)"></i><i class="blk" style="left:693px;top:322px;width:8px;height:8px;background:rgb(249,249,253)"></i><i class="blk" style="left:701px;top:322px;width:8px;height:8px;background:rgb(231,231,233)"></i><i class="blk" style="left:709px;top:322px;width:8px;height:8px;background:rgb(241,241,241)"></i><i class="blk" style="left:717px;top:322px;width:8px;height:8px;background:rgb(228,228,228)"></i><i class="blk" style="left:725px;top:322px;width:8px;height:8px;background:rgb(239,239,241)"></i><i class="blk" style="left:837px;top:298px;width:8px;height:8px;background:rgb(220,220,220)"></i><i class="blk" style="left:845px;top:298px;width:8px;height:8px;background:rgb(226,226,230)"></i><i class="blk" style="left:853px;top:298px;width:8px;height:8px;background:rgb(210,210,212)"></i><i class="blk" style="left:861px;top:298px;width:8px;height:8px;background:rgb(228,228,230)"></i><i class="blk" style="left:869px;top:298px;width:8px;height:8px;background:rgb(217,217,217)"></i><i class="blk" style="left:877px;top:298px;width:8px;height:8px;background:rgb(225,225,229)"></i><i class="blk" style="left:885px;top:298px;width:8px;height:8px;background:rgb(217,217,219)"></i><i class="blk" style="left:893px;top:298px;width:8px;height:8px;background:rgb(208,208,208)"></i><i class="blk" style="left:901px;top:298px;width:8px;height:8px;background:rgb(223,223,225)"></i><i class="blk" style="left:909px;top:298px;width:8px;height:8px;background:rgb(217,217,217)"></i><i class="blk" style="left:917px;top:298px;width:8px;height:8px;background:rgb(218,218,218)"></i><i class="blk" style="left:837px;top:306px;width:8px;height:8px;background:rgb(253,253,255)"></i><i class="blk" style="left:845px;top:306px;width:8px;height:8px;background:rgb(236,236,236)"></i><i class="blk" style="left:853px;top:306px;width:8px;height:8px;background:rgb(249,249,251)"></i><i class="blk" style="left:861px;top:306px;width:8px;height:8px;background:rgb(254,254,254)"></i><i class="blk" style="left:869px;top:306px;width:8px;height:8px;background:rgb(248,248,250)"></i><i class="blk" style="left:877px;top:306px;width:8px;height:8px;background:rgb(244,244,244)"></i><i class="blk" style="left:885px;top:306px;width:8px;height:8px;background:rgb(240,240,240)"></i><i class="blk" style="left:893px;top:306px;width:8px;height:8px;background:rgb(244,244,246)"></i><i class="blk" style="left:901px;top:306px;width:8px;height:8px;background:rgb(247,247,247)"></i><i class="blk" style="left:909px;top:306px;width:8px;height:8px;background:rgb(250,250,254)"></i><i class="blk" style="left:917px;top:306px;width:8px;height:8px;background:rgb(249,249,249)"></i><i class="blk" style="left:861px;top:314px;width:8px;height:8px;background:rgb(235,235,239)"></i><i class="blk" style="left:869px;top:314px;width:8px;height:8px;background:rgb(238,238,238)"></i><i class="blk" style="left:877px;top:314px;width:8px;height:8px;background:rgb(252,252,254)"></i><i class="blk" style="left:885px;top:314px;width:8px;height:8px;background:rgb(241,241,241)"></i><i class="blk" style="left:893px;top:314px;width:8px;height:8px;background:rgb(246,246,248)"></i><i class="blk" style="left:861px;top:322px;width:8px;height:8px;background:rgb(240,240,242)"></i><i class="blk" style="left:869px;top:322px;width:8px;height:8px;background:rgb(252,252,254)"></i><i class="blk" style="left:877px;top:322px;width:8px;height:8px;background:rgb(232,232,232)"></i><i class="blk" style="left:885px;top:322px;width:8px;height:8px;background:rgb(235,235,235)"></i><i class="blk" style="left:893px;top:322px;width:8px;height:8px;background:rgb(238,238,242)"></i><i class="blk" style="left:1013px;top:298px;width:8px;height:8px;background:rgb(220,220,220)"></i><i class="blk" style="left:1021px;top:298px;width:8px;height:8px;background:rgb(217,217,219)"></i><i class="blk" style="left:1029px;top:298px;width:8px;height:8px;background:rgb(224,224,224)"></i><i class="blk" style="left:1037px;top:298px;width:8px;height:8px;background:rgb(225,225,225)"></i><i class="blk" style="left:1045px;top:298px;width:8px;height:8px;background:rgb(227,227,227)"></i><i class="blk" style="left:1053px;top:298px;width:8px;height:8px;background:rgb(217,217,217)"></i><i class="blk" style="left:1061px;top:298px;width:8px;height:8px;background:rgb(216,216,218)"></i><i class="blk" style="left:1069px;top:298px;width:8px;height:8px;background:rgb(208,208,212)"></i><i class="blk" style="left:1077px;top:298px;width:8px;height:8px;background:rgb(217,217,217)"></i><i class="blk" style="left:1085px;top:298px;width:8px;height:8px;background:rgb(222,222,222)"></i><i class="blk" style="left:1093px;top:298px;width:8px;height:8px;background:rgb(228,228,228)"></i><i class="blk" style="left:1101px;top:298px;width:8px;height:8px;background:rgb(210,210,214)"></i><i class="blk" style="left:1109px;top:298px;width:8px;height:8px;background:rgb(224,224,224)"></i><i class="blk" style="left:1013px;top:306px;width:8px;height:8px;background:rgb(246,246,250)"></i><i class="blk" style="left:1021px;top:306px;width:8px;height:8px;background:rgb(247,247,249)"></i><i class="blk" style="left:1029px;top:306px;width:8px;height:8px;background:rgb(236,236,236)"></i><i class="blk" style="left:1037px;top:306px;width:8px;height:8px;background:rgb(233,233,233)"></i><i class="blk" style="left:1045px;top:306px;width:8px;height:8px;background:rgb(244,244,244)"></i><i class="blk" style="left:1053px;top:306px;width:8px;height:8px;background:rgb(242,242,242)"></i><i class="blk" style="left:1061px;top:306px;width:8px;height:8px;background:rgb(251,251,251)"></i><i class="blk" style="left:1069px;top:306px;width:8px;height:8px;background:rgb(233,233,233)"></i><i class="blk" style="left:1077px;top:306px;width:8px;height:8px;background:rgb(239,239,239)"></i><i class="blk" style="left:1085px;top:306px;width:8px;height:8px;background:rgb(249,249,251)"></i><i class="blk" style="left:1093px;top:306px;width:8px;height:8px;background:rgb(238,238,242)"></i><i class="blk" style="left:1101px;top:306px;width:8px;height:8px;background:rgb(251,251,251)"></i><i class="blk" style="left:1029px;top:314px;width:8px;height:8px;background:rgb(249,249,251)"></i><i class="blk" style="left:1037px;top:314px;width:8px;height:8px;background:rgb(248,248,252)"></i><i class="blk" style="left:1045px;top:314px;width:8px;height:8px;background:rgb(247,247,247)"></i><i class="blk" style="left:1053px;top:314px;width:8px;height:8px;background:rgb(240,240,240)"></i><i class="blk" style="left:1061px;top:314px;width:8px;height:8px;background:rgb(248,248,248)"></i><i class="blk" style="left:1069px;top:314px;width:8px;height:8px;background:rgb(242,242,242)"></i><i class="blk" style="left:1077px;top:314px;width:8px;height:8px;background:rgb(232,232,236)"></i><i class="blk" style="left:1085px;top:314px;width:8px;height:8px;background:rgb(242,242,242)"></i><i class="blk" style="left:1093px;top:314px;width:8px;height:8px;background:rgb(241,241,243)"></i><i class="blk" style="left:1029px;top:322px;width:8px;height:8px;background:rgb(244,244,248)"></i><i class="blk" style="left:1037px;top:322px;width:8px;height:8px;background:rgb(246,246,246)"></i><i class="blk" style="left:1045px;top:322px;width:8px;height:8px;background:rgb(248,248,248)"></i><i class="blk" style="left:1053px;top:322px;width:8px;height:8px;background:rgb(234,234,236)"></i><i class="blk" style="left:1061px;top:322px;width:8px;height:8px;background:rgb(229,229,229)"></i><i class="blk" style="left:1069px;top:322px;width:8px;height:8px;background:rgb(240,240,240)"></i><i class="blk" style="left:1077px;top:322px;width:8px;height:8px;background:rgb(245,245,245)"></i><i class="blk" style="left:1085px;top:322px;width:8px;height:8px;background:rgb(238,238,238)"></i><i class="blk" style="left:242px;top:477px;width:8px;height:8px;background:rgb(232,232,236)"></i><i class="blk" style="left:250px;top:477px;width:8px;height:8px;background:rgb(228,228,232)"></i><i class="blk" style="left:258px;top:477px;width:8px;height:8px;background:rgb(228,228,228)"></i><i class="blk" style="left:266px;top:477px;width:8px;height:8px;background:rgb(232,232,234)"></i><i class="blk" style="left:274px;top:477px;width:8px;height:8px;background:rgb(237,237,237)"></i><i class="blk" style="left:282px;top:477px;width:8px;height:8px;background:rgb(235,235,235)"></i><i class="blk" style="left:290px;top:477px;width:8px;height:8px;background:rgb(226,226,230)"></i><i class="blk" style="left:298px;top:477px;width:8px;height:8px;background:rgb(226,226,226)"></i><i class="blk" style="left:306px;top:477px;width:8px;height:8px;background:rgb(231,231,235)"></i><i class="blk" style="left:314px;top:477px;width:8px;height:8px;background:rgb(218,218,220)"></i><i class="blk" style="left:322px;top:477px;width:8px;height:8px;background:rgb(234,234,234)"></i><i class="blk" style="left:330px;top:477px;width:8px;height:8px;background:rgb(237,237,239)"></i><i class="blk" style="left:338px;top:477px;width:8px;height:8px;background:rgb(220,220,220)"></i><i class="blk" style="left:346px;top:477px;width:8px;height:8px;background:rgb(238,238,238)"></i><i class="blk" style="left:354px;top:477px;width:8px;height:8px;background:rgb(233,233,233)"></i><i class="blk" style="left:362px;top:477px;width:8px;height:8px;background:rgb(225,225,229)"></i><i class="blk" style="left:370px;top:477px;width:8px;height:8px;background:rgb(220,220,220)"></i><i class="blk" style="left:378px;top:477px;width:8px;height:8px;background:rgb(220,220,224)"></i><i class="blk" style="left:386px;top:477px;width:8px;height:8px;background:rgb(238,238,242)"></i><i class="blk" style="left:394px;top:477px;width:8px;height:8px;background:rgb(224,224,224)"></i><i class="blk" style="left:402px;top:477px;width:8px;height:8px;background:rgb(224,224,224)"></i><i class="blk" style="left:250px;top:485px;width:8px;height:8px;background:rgb(244,244,244)"></i><i class="blk" style="left:258px;top:485px;width:8px;height:8px;background:rgb(236,236,240)"></i><i class="blk" style="left:266px;top:485px;width:8px;height:8px;background:rgb(238,238,238)"></i><i class="blk" style="left:274px;top:485px;width:8px;height:8px;background:rgb(237,237,239)"></i><i class="blk" style="left:282px;top:485px;width:8px;height:8px;background:rgb(240,240,240)"></i><i class="blk" style="left:290px;top:485px;width:8px;height:8px;background:rgb(231,231,231)"></i><i class="blk" style="left:298px;top:485px;width:8px;height:8px;background:rgb(250,250,250)"></i><i class="blk" style="left:306px;top:485px;width:8px;height:8px;background:rgb(230,230,232)"></i><i class="blk" style="left:314px;top:485px;width:8px;height:8px;background:rgb(229,229,229)"></i><i class="blk" style="left:322px;top:485px;width:8px;height:8px;background:rgb(234,234,234)"></i><i class="blk" style="left:330px;top:485px;width:8px;height:8px;background:rgb(247,247,249)"></i><i class="blk" style="left:338px;top:485px;width:8px;height:8px;background:rgb(237,237,241)"></i><i class="blk" style="left:346px;top:485px;width:8px;height:8px;background:rgb(244,244,244)"></i><i class="blk" style="left:354px;top:485px;width:8px;height:8px;background:rgb(235,235,235)"></i><i class="blk" style="left:362px;top:485px;width:8px;height:8px;background:rgb(238,238,238)"></i><i class="blk" style="left:370px;top:485px;width:8px;height:8px;background:rgb(234,234,234)"></i><i class="blk" style="left:378px;top:485px;width:8px;height:8px;background:rgb(242,242,244)"></i><i class="blk" style="left:386px;top:485px;width:8px;height:8px;background:rgb(230,230,230)"></i><i class="blk" style="left:394px;top:485px;width:8px;height:8px;background:rgb(230,230,230)"></i><i class="blk" style="left:402px;top:485px;width:8px;height:8px;background:rgb(238,238,240)"></i><i class="blk" style="left:298px;top:493px;width:8px;height:8px;background:rgb(250,250,254)"></i><i class="blk" style="left:306px;top:493px;width:8px;height:8px;background:rgb(249,249,251)"></i><i class="blk" style="left:314px;top:493px;width:8px;height:8px;background:rgb(242,242,242)"></i><i class="blk" style="left:322px;top:493px;width:8px;height:8px;background:rgb(240,240,240)"></i><i class="blk" style="left:330px;top:493px;width:8px;height:8px;background:rgb(249,249,249)"></i><i class="blk" style="left:338px;top:493px;width:8px;height:8px;background:rgb(234,234,234)"></i><i class="blk" style="left:346px;top:493px;width:8px;height:8px;background:rgb(233,233,235)"></i><i class="blk" style="left:354px;top:493px;width:8px;height:8px;background:rgb(242,242,242)"></i><i class="blk" style="left:298px;top:501px;width:8px;height:8px;background:rgb(235,235,235)"></i><i class="blk" style="left:306px;top:501px;width:8px;height:8px;background:rgb(234,234,234)"></i><i class="blk" style="left:314px;top:501px;width:8px;height:8px;background:rgb(250,250,250)"></i><i class="blk" style="left:322px;top:501px;width:8px;height:8px;background:rgb(229,229,229)"></i><i class="blk" style="left:330px;top:501px;width:8px;height:8px;background:rgb(240,240,240)"></i><i class="blk" style="left:338px;top:501px;width:8px;height:8px;background:rgb(249,249,249)"></i><i class="blk" style="left:346px;top:501px;width:8px;height:8px;background:rgb(243,243,247)"></i><i class="blk" style="left:354px;top:501px;width:8px;height:8px;background:rgb(243,243,247)"></i><i class="blk" style="left:474px;top:477px;width:8px;height:8px;background:rgb(236,236,238)"></i><i class="blk" style="left:482px;top:477px;width:8px;height:8px;background:rgb(230,230,230)"></i><i class="blk" style="left:490px;top:477px;width:8px;height:8px;background:rgb(222,222,222)"></i><i class="blk" style="left:498px;top:477px;width:8px;height:8px;background:rgb(223,223,225)"></i><i class="blk" style="left:506px;top:477px;width:8px;height:8px;background:rgb(236,236,236)"></i><i class="blk" style="left:514px;top:477px;width:8px;height:8px;background:rgb(215,215,217)"></i><i class="blk" style="left:522px;top:477px;width:8px;height:8px;background:rgb(224,224,224)"></i><i class="blk" style="left:530px;top:477px;width:8px;height:8px;background:rgb(216,216,220)"></i><i class="blk" style="left:538px;top:477px;width:8px;height:8px;background:rgb(234,234,236)"></i><i class="blk" style="left:474px;top:485px;width:8px;height:8px;background:rgb(242,242,244)"></i><i class="blk" style="left:482px;top:485px;width:8px;height:8px;background:rgb(229,229,229)"></i><i class="blk" style="left:490px;top:485px;width:8px;height:8px;background:rgb(232,232,236)"></i><i class="blk" style="left:498px;top:485px;width:8px;height:8px;background:rgb(229,229,231)"></i><i class="blk" style="left:506px;top:485px;width:8px;height:8px;background:rgb(250,250,252)"></i><i class="blk" style="left:514px;top:485px;width:8px;height:8px;background:rgb(234,234,236)"></i><i class="blk" style="left:522px;top:485px;width:8px;height:8px;background:rgb(233,233,233)"></i><i class="blk" style="left:530px;top:485px;width:8px;height:8px;background:rgb(229,229,233)"></i><i class="blk" style="left:538px;top:485px;width:8px;height:8px;background:rgb(230,230,232)"></i><i class="blk" style="left:474px;top:493px;width:8px;height:8px;background:rgb(240,240,240)"></i><i class="blk" style="left:482px;top:493px;width:8px;height:8px;background:rgb(234,234,234)"></i><i class="blk" style="left:490px;top:493px;width:8px;height:8px;background:rgb(230,230,230)"></i><i class="blk" style="left:498px;top:493px;width:8px;height:8px;background:rgb(232,232,232)"></i><i class="blk" style="left:506px;top:493px;width:8px;height:8px;background:rgb(237,237,239)"></i><i class="blk" style="left:514px;top:493px;width:8px;height:8px;background:rgb(235,235,235)"></i><i class="blk" style="left:522px;top:493px;width:8px;height:8px;background:rgb(230,230,230)"></i><i class="blk" style="left:530px;top:493px;width:8px;height:8px;background:rgb(243,243,247)"></i><i class="blk" style="left:538px;top:493px;width:8px;height:8px;background:rgb(245,245,249)"></i><i class="blk" style="left:474px;top:501px;width:8px;height:8px;background:rgb(232,232,232)"></i><i class="blk" style="left:482px;top:501px;width:8px;height:8px;background:rgb(229,229,233)"></i><i class="blk" style="left:490px;top:501px;width:8px;height:8px;background:rgb(245,245,245)"></i><i class="blk" style="left:498px;top:501px;width:8px;height:8px;background:rgb(249,249,249)"></i><i class="blk" style="left:506px;top:501px;width:8px;height:8px;background:rgb(247,247,247)"></i><i class="blk" style="left:514px;top:501px;width:8px;height:8px;background:rgb(230,230,230)"></i><i class="blk" style="left:522px;top:501px;width:8px;height:8px;background:rgb(231,231,233)"></i><i class="blk" style="left:530px;top:501px;width:8px;height:8px;background:rgb(250,250,254)"></i><i class="blk" style="left:538px;top:501px;width:8px;height:8px;background:rgb(247,247,247)"></i><i class="blk" style="left:666px;top:477px;width:8px;height:8px;background:rgb(228,228,228)"></i><i class="blk" style="left:674px;top:477px;width:8px;height:8px;background:rgb(225,225,225)"></i><i class="blk" style="left:682px;top:477px;width:8px;height:8px;background:rgb(225,225,225)"></i><i class="blk" style="left:690px;top:477px;width:8px;height:8px;background:rgb(231,231,231)"></i><i class="blk" style="left:698px;top:477px;width:8px;height:8px;background:rgb(229,229,229)"></i><i class="blk" style="left:706px;top:477px;width:8px;height:8px;background:rgb(231,231,235)"></i><i class="blk" style="left:714px;top:477px;width:8px;height:8px;background:rgb(220,220,220)"></i><i class="blk" style="left:722px;top:477px;width:8px;height:8px;background:rgb(233,233,233)"></i><i class="blk" style="left:666px;top:485px;width:8px;height:8px;background:rgb(245,245,245)"></i><i class="blk" style="left:674px;top:485px;width:8px;height:8px;background:rgb(234,234,238)"></i><i class="blk" style="left:682px;top:485px;width:8px;height:8px;background:rgb(239,239,243)"></i><i class="blk" style="left:690px;top:485px;width:8px;height:8px;background:rgb(230,230,232)"></i><i class="blk" style="left:698px;top:485px;width:8px;height:8px;background:rgb(245,245,245)"></i><i class="blk" style="left:706px;top:485px;width:8px;height:8px;background:rgb(230,230,230)"></i><i class="blk" style="left:714px;top:485px;width:8px;height:8px;background:rgb(236,236,238)"></i><i class="blk" style="left:722px;top:485px;width:8px;height:8px;background:rgb(242,242,242)"></i><i class="blk" style="left:666px;top:493px;width:8px;height:8px;background:rgb(229,229,229)"></i><i class="blk" style="left:674px;top:493px;width:8px;height:8px;background:rgb(239,239,239)"></i><i class="blk" style="left:682px;top:493px;width:8px;height:8px;background:rgb(244,244,248)"></i><i class="blk" style="left:690px;top:493px;width:8px;height:8px;background:rgb(235,235,237)"></i><i class="blk" style="left:698px;top:493px;width:8px;height:8px;background:rgb(239,239,243)"></i><i class="blk" style="left:706px;top:493px;width:8px;height:8px;background:rgb(245,245,245)"></i><i class="blk" style="left:714px;top:493px;width:8px;height:8px;background:rgb(235,235,235)"></i><i class="blk" style="left:722px;top:493px;width:8px;height:8px;background:rgb(249,249,249)"></i><i class="blk" style="left:666px;top:501px;width:8px;height:8px;background:rgb(235,235,235)"></i><i class="blk" style="left:674px;top:501px;width:8px;height:8px;background:rgb(247,247,251)"></i><i class="blk" style="left:682px;top:501px;width:8px;height:8px;background:rgb(250,250,254)"></i><i class="blk" style="left:690px;top:501px;width:8px;height:8px;background:rgb(233,233,233)"></i><i class="blk" style="left:698px;top:501px;width:8px;height:8px;background:rgb(230,230,230)"></i><i class="blk" style="left:706px;top:501px;width:8px;height:8px;background:rgb(232,232,234)"></i><i class="blk" style="left:714px;top:501px;width:8px;height:8px;background:rgb(249,249,249)"></i><i class="blk" style="left:722px;top:501px;width:8px;height:8px;background:rgb(242,242,244)"></i><i class="blk" style="left:826px;top:477px;width:8px;height:8px;background:rgb(229,229,231)"></i><i class="blk" style="left:834px;top:477px;width:8px;height:8px;background:rgb(215,215,219)"></i><i class="blk" style="left:842px;top:477px;width:8px;height:8px;background:rgb(218,218,218)"></i><i class="blk" style="left:850px;top:477px;width:8px;height:8px;background:rgb(210,210,214)"></i><i class="blk" style="left:858px;top:477px;width:8px;height:8px;background:rgb(224,224,228)"></i><i class="blk" style="left:866px;top:477px;width:8px;height:8px;background:rgb(216,216,216)"></i><i class="blk" style="left:874px;top:477px;width:8px;height:8px;background:rgb(219,219,223)"></i><i class="blk" style="left:882px;top:477px;width:8px;height:8px;background:rgb(216,216,218)"></i><i class="blk" style="left:890px;top:477px;width:8px;height:8px;background:rgb(210,210,212)"></i><i class="blk" style="left:898px;top:477px;width:8px;height:8px;background:rgb(228,228,228)"></i><i class="blk" style="left:906px;top:477px;width:8px;height:8px;background:rgb(230,230,230)"></i><i class="blk" style="left:914px;top:477px;width:8px;height:8px;background:rgb(225,225,227)"></i><i class="blk" style="left:922px;top:477px;width:8px;height:8px;background:rgb(215,215,215)"></i><i class="blk" style="left:826px;top:485px;width:8px;height:8px;background:rgb(233,233,233)"></i><i class="blk" style="left:834px;top:485px;width:8px;height:8px;background:rgb(232,232,236)"></i><i class="blk" style="left:842px;top:485px;width:8px;height:8px;background:rgb(241,241,241)"></i><i class="blk" style="left:850px;top:485px;width:8px;height:8px;background:rgb(231,231,231)"></i><i class="blk" style="left:858px;top:485px;width:8px;height:8px;background:rgb(243,243,245)"></i><i class="blk" style="left:866px;top:485px;width:8px;height:8px;background:rgb(238,238,238)"></i><i class="blk" style="left:874px;top:485px;width:8px;height:8px;background:rgb(230,230,232)"></i><i class="blk" style="left:882px;top:485px;width:8px;height:8px;background:rgb(234,234,236)"></i><i class="blk" style="left:890px;top:485px;width:8px;height:8px;background:rgb(229,229,231)"></i><i class="blk" style="left:898px;top:485px;width:8px;height:8px;background:rgb(242,242,246)"></i><i class="blk" style="left:906px;top:485px;width:8px;height:8px;background:rgb(244,244,248)"></i><i class="blk" style="left:914px;top:485px;width:8px;height:8px;background:rgb(245,245,245)"></i><i class="blk" style="left:922px;top:485px;width:8px;height:8px;background:rgb(240,240,240)"></i><i class="blk" style="left:842px;top:493px;width:8px;height:8px;background:rgb(249,249,253)"></i><i class="blk" style="left:850px;top:493px;width:8px;height:8px;background:rgb(238,238,238)"></i><i class="blk" style="left:858px;top:493px;width:8px;height:8px;background:rgb(243,243,245)"></i><i class="blk" style="left:866px;top:493px;width:8px;height:8px;background:rgb(239,239,239)"></i><i class="blk" style="left:874px;top:493px;width:8px;height:8px;background:rgb(232,232,236)"></i><i class="blk" style="left:882px;top:493px;width:8px;height:8px;background:rgb(236,236,238)"></i><i class="blk" style="left:890px;top:493px;width:8px;height:8px;background:rgb(234,234,236)"></i><i class="blk" style="left:898px;top:493px;width:8px;height:8px;background:rgb(237,237,237)"></i><i class="blk" style="left:906px;top:493px;width:8px;height:8px;background:rgb(235,235,239)"></i><i class="blk" style="left:842px;top:501px;width:8px;height:8px;background:rgb(231,231,231)"></i><i class="blk" style="left:850px;top:501px;width:8px;height:8px;background:rgb(230,230,234)"></i><i class="blk" style="left:858px;top:501px;width:8px;height:8px;background:rgb(241,241,245)"></i><i class="blk" style="left:866px;top:501px;width:8px;height:8px;background:rgb(248,248,252)"></i><i class="blk" style="left:874px;top:501px;width:8px;height:8px;background:rgb(238,238,238)"></i><i class="blk" style="left:882px;top:501px;width:8px;height:8px;background:rgb(234,234,234)"></i><i class="blk" style="left:890px;top:501px;width:8px;height:8px;background:rgb(236,236,236)"></i><i class="blk" style="left:898px;top:501px;width:8px;height:8px;background:rgb(236,236,238)"></i><i class="blk" style="left:906px;top:501px;width:8px;height:8px;background:rgb(234,234,234)"></i><i class="blk" style="left:1026px;top:477px;width:8px;height:8px;background:rgb(229,229,233)"></i><i class="blk" style="left:1034px;top:477px;width:8px;height:8px;background:rgb(218,218,218)"></i><i class="blk" style="left:1042px;top:477px;width:8px;height:8px;background:rgb(218,218,220)"></i><i class="blk" style="left:1050px;top:477px;width:8px;height:8px;background:rgb(226,226,230)"></i><i class="blk" style="left:1058px;top:477px;width:8px;height:8px;background:rgb(216,216,218)"></i><i class="blk" style="left:1066px;top:477px;width:8px;height:8px;background:rgb(212,212,212)"></i><i class="blk" style="left:1074px;top:477px;width:8px;height:8px;background:rgb(212,212,212)"></i><i class="blk" style="left:1082px;top:477px;width:8px;height:8px;background:rgb(218,218,222)"></i><i class="blk" style="left:1090px;top:477px;width:8px;height:8px;background:rgb(219,219,221)"></i><i class="blk" style="left:1098px;top:477px;width:8px;height:8px;background:rgb(228,228,228)"></i><i class="blk" style="left:1026px;top:485px;width:8px;height:8px;background:rgb(231,231,235)"></i><i class="blk" style="left:1034px;top:485px;width:8px;height:8px;background:rgb(244,244,248)"></i><i class="blk" style="left:1042px;top:485px;width:8px;height:8px;background:rgb(250,250,254)"></i><i class="blk" style="left:1050px;top:485px;width:8px;height:8px;background:rgb(229,229,233)"></i><i class="blk" style="left:1058px;top:485px;width:8px;height:8px;background:rgb(249,249,253)"></i><i class="blk" style="left:1066px;top:485px;width:8px;height:8px;background:rgb(250,250,250)"></i><i class="blk" style="left:1074px;top:485px;width:8px;height:8px;background:rgb(246,246,246)"></i><i class="blk" style="left:1082px;top:485px;width:8px;height:8px;background:rgb(232,232,232)"></i><i class="blk" style="left:1090px;top:485px;width:8px;height:8px;background:rgb(249,249,253)"></i><i class="blk" style="left:1098px;top:485px;width:8px;height:8px;background:rgb(230,230,230)"></i><i class="blk" style="left:1026px;top:493px;width:8px;height:8px;background:rgb(229,229,229)"></i><i class="blk" style="left:1034px;top:493px;width:8px;height:8px;background:rgb(234,234,234)"></i><i class="blk" style="left:1042px;top:493px;width:8px;height:8px;background:rgb(243,243,245)"></i><i class="blk" style="left:1050px;top:493px;width:8px;height:8px;background:rgb(250,250,252)"></i><i class="blk" style="left:1058px;top:493px;width:8px;height:8px;background:rgb(240,240,244)"></i><i class="blk" style="left:1066px;top:493px;width:8px;height:8px;background:rgb(244,244,244)"></i><i class="blk" style="left:1074px;top:493px;width:8px;height:8px;background:rgb(231,231,233)"></i><i class="blk" style="left:1082px;top:493px;width:8px;height:8px;background:rgb(240,240,240)"></i><i class="blk" style="left:1090px;top:493px;width:8px;height:8px;background:rgb(237,237,237)"></i><i class="blk" style="left:1098px;top:493px;width:8px;height:8px;background:rgb(246,246,246)"></i><i class="blk" style="left:1026px;top:501px;width:8px;height:8px;background:rgb(229,229,231)"></i><i class="blk" style="left:1034px;top:501px;width:8px;height:8px;background:rgb(250,250,252)"></i><i class="blk" style="left:1042px;top:501px;width:8px;height:8px;background:rgb(250,250,250)"></i><i class="blk" style="left:1050px;top:501px;width:8px;height:8px;background:rgb(239,239,239)"></i><i class="blk" style="left:1058px;top:501px;width:8px;height:8px;background:rgb(241,241,241)"></i><i class="blk" style="left:1066px;top:501px;width:8px;height:8px;background:rgb(250,250,252)"></i><i class="blk" style="left:1074px;top:501px;width:8px;height:8px;background:rgb(230,230,230)"></i><i class="blk" style="left:1082px;top:501px;width:8px;height:8px;background:rgb(239,239,243)"></i><i class="blk" style="left:1090px;top:501px;width:8px;height:8px;background:rgb(230,230,230)"></i><i class="blk" style="left:1098px;top:501px;width:8px;height:8px;background:rgb(243,243,245)"></i><i class="blk" style="left:310px;top:654px;width:8px;height:8px;background:rgb(224,224,224)"></i><i class="blk" style="left:318px;top:654px;width:8px;height:8px;background:rgb(235,235,239)"></i><i class="blk" style="left:326px;top:654px;width:8px;height:8px;background:rgb(227,227,231)"></i><i class="blk" style="left:334px;top:654px;width:8px;height:8px;background:rgb(224,224,226)"></i><i class="blk" style="left:310px;top:662px;width:8px;height:8px;background:rgb(236,236,236)"></i><i class="blk" style="left:318px;top:662px;width:8px;height:8px;background:rgb(224,224,224)"></i><i class="blk" style="left:326px;top:662px;width:8px;height:8px;background:rgb(226,226,226)"></i><i class="blk" style="left:334px;top:662px;width:8px;height:8px;background:rgb(225,225,225)"></i><i class="blk" style="left:294px;top:670px;width:8px;height:8px;background:rgb(238,238,240)"></i><i class="blk" style="left:302px;top:670px;width:8px;height:8px;background:rgb(235,235,239)"></i><i class="blk" style="left:310px;top:670px;width:8px;height:8px;background:rgb(246,246,246)"></i><i class="blk" style="left:318px;top:670px;width:8px;height:8px;background:rgb(243,243,243)"></i><i class="blk" style="left:326px;top:670px;width:8px;height:8px;background:rgb(253,253,253)"></i><i class="blk" style="left:334px;top:670px;width:8px;height:8px;background:rgb(253,253,253)"></i><i class="blk" style="left:342px;top:670px;width:8px;height:8px;background:rgb(237,237,237)"></i><i class="blk" style="left:350px;top:670px;width:8px;height:8px;background:rgb(242,242,242)"></i><i class="blk" style="left:358px;top:670px;width:8px;height:8px;background:rgb(237,237,241)"></i><i class="blk" style="left:294px;top:678px;width:8px;height:8px;background:rgb(242,242,244)"></i><i class="blk" style="left:302px;top:678px;width:8px;height:8px;background:rgb(239,239,239)"></i><i class="blk" style="left:310px;top:678px;width:8px;height:8px;background:rgb(243,243,245)"></i><i class="blk" style="left:318px;top:678px;width:8px;height:8px;background:rgb(227,227,231)"></i><i class="blk" style="left:326px;top:678px;width:8px;height:8px;background:rgb(223,223,227)"></i><i class="blk" style="left:334px;top:678px;width:8px;height:8px;background:rgb(241,241,243)"></i><i class="blk" style="left:342px;top:678px;width:8px;height:8px;background:rgb(232,232,232)"></i><i class="blk" style="left:350px;top:678px;width:8px;height:8px;background:rgb(223,223,225)"></i><i class="blk" style="left:358px;top:678px;width:8px;height:8px;background:rgb(224,224,228)"></i><i class="blk" style="left:479px;top:654px;width:8px;height:8px;background:rgb(250,250,250)"></i><i class="blk" style="left:487px;top:654px;width:8px;height:8px;background:rgb(241,241,241)"></i><i class="blk" style="left:495px;top:654px;width:8px;height:8px;background:rgb(237,237,239)"></i><i class="blk" style="left:503px;top:654px;width:8px;height:8px;background:rgb(247,247,251)"></i><i class="blk" style="left:511px;top:654px;width:8px;height:8px;background:rgb(230,230,234)"></i><i class="blk" style="left:519px;top:654px;width:8px;height:8px;background:rgb(233,233,237)"></i><i class="blk" style="left:527px;top:654px;width:8px;height:8px;background:rgb(233,233,235)"></i><i class="blk" style="left:535px;top:654px;width:8px;height:8px;background:rgb(245,245,249)"></i><i class="blk" style="left:479px;top:662px;width:8px;height:8px;background:rgb(217,217,221)"></i><i class="blk" style="left:487px;top:662px;width:8px;height:8px;background:rgb(222,222,226)"></i><i class="blk" style="left:495px;top:662px;width:8px;height:8px;background:rgb(217,217,217)"></i><i class="blk" style="left:503px;top:662px;width:8px;height:8px;background:rgb(227,227,227)"></i><i class="blk" style="left:511px;top:662px;width:8px;height:8px;background:rgb(222,222,222)"></i><i class="blk" style="left:519px;top:662px;width:8px;height:8px;background:rgb(236,236,238)"></i><i class="blk" style="left:527px;top:662px;width:8px;height:8px;background:rgb(224,224,226)"></i><i class="blk" style="left:535px;top:662px;width:8px;height:8px;background:rgb(238,238,238)"></i><i class="blk" style="left:479px;top:670px;width:8px;height:8px;background:rgb(238,238,240)"></i><i class="blk" style="left:487px;top:670px;width:8px;height:8px;background:rgb(253,253,255)"></i><i class="blk" style="left:495px;top:670px;width:8px;height:8px;background:rgb(233,233,233)"></i><i class="blk" style="left:503px;top:670px;width:8px;height:8px;background:rgb(233,233,233)"></i><i class="blk" style="left:511px;top:670px;width:8px;height:8px;background:rgb(235,235,239)"></i><i class="blk" style="left:519px;top:670px;width:8px;height:8px;background:rgb(253,253,255)"></i><i class="blk" style="left:527px;top:670px;width:8px;height:8px;background:rgb(250,250,254)"></i><i class="blk" style="left:535px;top:670px;width:8px;height:8px;background:rgb(250,250,250)"></i><i class="blk" style="left:543px;top:670px;width:8px;height:8px;background:rgb(253,253,253)"></i><i class="blk" style="left:479px;top:678px;width:8px;height:8px;background:rgb(223,223,225)"></i><i class="blk" style="left:487px;top:678px;width:8px;height:8px;background:rgb(241,241,241)"></i><i class="blk" style="left:495px;top:678px;width:8px;height:8px;background:rgb(236,236,238)"></i><i class="blk" style="left:503px;top:678px;width:8px;height:8px;background:rgb(241,241,245)"></i><i class="blk" style="left:511px;top:678px;width:8px;height:8px;background:rgb(230,230,230)"></i><i class="blk" style="left:519px;top:678px;width:8px;height:8px;background:rgb(234,234,238)"></i><i class="blk" style="left:527px;top:678px;width:8px;height:8px;background:rgb(239,239,239)"></i><i class="blk" style="left:535px;top:678px;width:8px;height:8px;background:rgb(231,231,231)"></i><i class="blk" style="left:543px;top:678px;width:8px;height:8px;background:rgb(233,233,235)"></i><i class="blk" style="left:646px;top:654px;width:8px;height:8px;background:rgb(228,228,232)"></i><i class="blk" style="left:654px;top:654px;width:8px;height:8px;background:rgb(244,244,244)"></i><i class="blk" style="left:662px;top:654px;width:8px;height:8px;background:rgb(230,230,230)"></i><i class="blk" style="left:670px;top:654px;width:8px;height:8px;background:rgb(229,229,233)"></i><i class="blk" style="left:678px;top:654px;width:8px;height:8px;background:rgb(235,235,239)"></i><i class="blk" style="left:686px;top:654px;width:8px;height:8px;background:rgb(228,228,228)"></i><i class="blk" style="left:694px;top:654px;width:8px;height:8px;background:rgb(234,234,234)"></i><i class="blk" style="left:702px;top:654px;width:8px;height:8px;background:rgb(241,241,241)"></i><i class="blk" style="left:710px;top:654px;width:8px;height:8px;background:rgb(242,242,244)"></i><i class="blk" style="left:718px;top:654px;width:8px;height:8px;background:rgb(231,231,233)"></i><i class="blk" style="left:726px;top:654px;width:8px;height:8px;background:rgb(233,233,235)"></i><i class="blk" style="left:734px;top:654px;width:8px;height:8px;background:rgb(229,229,229)"></i><i class="blk" style="left:742px;top:654px;width:8px;height:8px;background:rgb(229,229,229)"></i><i class="blk" style="left:646px;top:662px;width:8px;height:8px;background:rgb(220,220,220)"></i><i class="blk" style="left:654px;top:662px;width:8px;height:8px;background:rgb(224,224,228)"></i><i class="blk" style="left:662px;top:662px;width:8px;height:8px;background:rgb(222,222,222)"></i><i class="blk" style="left:670px;top:662px;width:8px;height:8px;background:rgb(228,228,228)"></i><i class="blk" style="left:678px;top:662px;width:8px;height:8px;background:rgb(231,231,231)"></i><i class="blk" style="left:686px;top:662px;width:8px;height:8px;background:rgb(231,231,231)"></i><i class="blk" style="left:694px;top:662px;width:8px;height:8px;background:rgb(219,219,223)"></i><i class="blk" style="left:702px;top:662px;width:8px;height:8px;background:rgb(236,236,236)"></i><i class="blk" style="left:710px;top:662px;width:8px;height:8px;background:rgb(235,235,237)"></i><i class="blk" style="left:718px;top:662px;width:8px;height:8px;background:rgb(217,217,219)"></i><i class="blk" style="left:726px;top:662px;width:8px;height:8px;background:rgb(222,222,222)"></i><i class="blk" style="left:734px;top:662px;width:8px;height:8px;background:rgb(221,221,221)"></i><i class="blk" style="left:742px;top:662px;width:8px;height:8px;background:rgb(237,237,239)"></i><i class="blk" style="left:662px;top:670px;width:8px;height:8px;background:rgb(244,244,244)"></i><i class="blk" style="left:670px;top:670px;width:8px;height:8px;background:rgb(242,242,244)"></i><i class="blk" style="left:678px;top:670px;width:8px;height:8px;background:rgb(250,250,250)"></i><i class="blk" style="left:686px;top:670px;width:8px;height:8px;background:rgb(235,235,237)"></i><i class="blk" style="left:694px;top:670px;width:8px;height:8px;background:rgb(237,237,239)"></i><i class="blk" style="left:702px;top:670px;width:8px;height:8px;background:rgb(240,240,240)"></i><i class="blk" style="left:710px;top:670px;width:8px;height:8px;background:rgb(237,237,239)"></i><i class="blk" style="left:718px;top:670px;width:8px;height:8px;background:rgb(233,233,233)"></i><i class="blk" style="left:726px;top:670px;width:8px;height:8px;background:rgb(250,250,252)"></i><i class="blk" style="left:662px;top:678px;width:8px;height:8px;background:rgb(229,229,231)"></i><i class="blk" style="left:670px;top:678px;width:8px;height:8px;background:rgb(225,225,227)"></i><i class="blk" style="left:678px;top:678px;width:8px;height:8px;background:rgb(222,222,222)"></i><i class="blk" style="left:686px;top:678px;width:8px;height:8px;background:rgb(238,238,242)"></i><i class="blk" style="left:694px;top:678px;width:8px;height:8px;background:rgb(222,222,222)"></i><i class="blk" style="left:702px;top:678px;width:8px;height:8px;background:rgb(238,238,238)"></i><i class="blk" style="left:710px;top:678px;width:8px;height:8px;background:rgb(235,235,235)"></i><i class="blk" style="left:718px;top:678px;width:8px;height:8px;background:rgb(235,235,239)"></i><i class="blk" style="left:726px;top:678px;width:8px;height:8px;background:rgb(236,236,240)"></i><i class="blk" style="left:830px;top:654px;width:8px;height:8px;background:rgb(244,244,246)"></i><i class="blk" style="left:838px;top:654px;width:8px;height:8px;background:rgb(232,232,232)"></i><i class="blk" style="left:846px;top:654px;width:8px;height:8px;background:rgb(229,229,231)"></i><i class="blk" style="left:854px;top:654px;width:8px;height:8px;background:rgb(232,232,232)"></i><i class="blk" style="left:862px;top:654px;width:8px;height:8px;background:rgb(242,242,244)"></i><i class="blk" style="left:870px;top:654px;width:8px;height:8px;background:rgb(237,237,241)"></i><i class="blk" style="left:878px;top:654px;width:8px;height:8px;background:rgb(239,239,239)"></i><i class="blk" style="left:886px;top:654px;width:8px;height:8px;background:rgb(243,243,247)"></i><i class="blk" style="left:894px;top:654px;width:8px;height:8px;background:rgb(242,242,246)"></i><i class="blk" style="left:902px;top:654px;width:8px;height:8px;background:rgb(225,225,225)"></i><i class="blk" style="left:910px;top:654px;width:8px;height:8px;background:rgb(231,231,233)"></i><i class="blk" style="left:918px;top:654px;width:8px;height:8px;background:rgb(233,233,233)"></i><i class="blk" style="left:830px;top:662px;width:8px;height:8px;background:rgb(215,215,215)"></i><i class="blk" style="left:838px;top:662px;width:8px;height:8px;background:rgb(225,225,229)"></i><i class="blk" style="left:846px;top:662px;width:8px;height:8px;background:rgb(214,214,216)"></i><i class="blk" style="left:854px;top:662px;width:8px;height:8px;background:rgb(229,229,229)"></i><i class="blk" style="left:862px;top:662px;width:8px;height:8px;background:rgb(216,216,218)"></i><i class="blk" style="left:870px;top:662px;width:8px;height:8px;background:rgb(216,216,216)"></i><i class="blk" style="left:878px;top:662px;width:8px;height:8px;background:rgb(233,233,233)"></i><i class="blk" style="left:886px;top:662px;width:8px;height:8px;background:rgb(221,221,221)"></i><i class="blk" style="left:894px;top:662px;width:8px;height:8px;background:rgb(219,219,219)"></i><i class="blk" style="left:902px;top:662px;width:8px;height:8px;background:rgb(234,234,238)"></i><i class="blk" style="left:910px;top:662px;width:8px;height:8px;background:rgb(219,219,223)"></i><i class="blk" style="left:918px;top:662px;width:8px;height:8px;background:rgb(214,214,214)"></i><i class="blk" style="left:846px;top:670px;width:8px;height:8px;background:rgb(249,249,249)"></i><i class="blk" style="left:854px;top:670px;width:8px;height:8px;background:rgb(248,248,248)"></i><i class="blk" style="left:862px;top:670px;width:8px;height:8px;background:rgb(253,253,253)"></i><i class="blk" style="left:870px;top:670px;width:8px;height:8px;background:rgb(247,247,247)"></i><i class="blk" style="left:878px;top:670px;width:8px;height:8px;background:rgb(243,243,243)"></i><i class="blk" style="left:886px;top:670px;width:8px;height:8px;background:rgb(243,243,243)"></i><i class="blk" style="left:894px;top:670px;width:8px;height:8px;background:rgb(238,238,238)"></i><i class="blk" style="left:902px;top:670px;width:8px;height:8px;background:rgb(235,235,235)"></i><i class="blk" style="left:846px;top:678px;width:8px;height:8px;background:rgb(231,231,233)"></i><i class="blk" style="left:854px;top:678px;width:8px;height:8px;background:rgb(219,219,223)"></i><i class="blk" style="left:862px;top:678px;width:8px;height:8px;background:rgb(229,229,231)"></i><i class="blk" style="left:870px;top:678px;width:8px;height:8px;background:rgb(231,231,233)"></i><i class="blk" style="left:878px;top:678px;width:8px;height:8px;background:rgb(229,229,233)"></i><i class="blk" style="left:886px;top:678px;width:8px;height:8px;background:rgb(225,225,227)"></i><i class="blk" style="left:894px;top:678px;width:8px;height:8px;background:rgb(226,226,230)"></i><i class="blk" style="left:902px;top:678px;width:8px;height:8px;background:rgb(220,220,220)"></i><i class="blk" style="left:1038px;top:654px;width:8px;height:8px;background:rgb(236,236,240)"></i><i class="blk" style="left:1046px;top:654px;width:8px;height:8px;background:rgb(233,233,237)"></i><i class="blk" style="left:1054px;top:654px;width:8px;height:8px;background:rgb(239,239,243)"></i><i class="blk" style="left:1062px;top:654px;width:8px;height:8px;background:rgb(241,241,245)"></i><i class="blk" style="left:1070px;top:654px;width:8px;height:8px;background:rgb(231,231,231)"></i><i class="blk" style="left:1078px;top:654px;width:8px;height:8px;background:rgb(225,225,229)"></i><i class="blk" style="left:1038px;top:662px;width:8px;height:8px;background:rgb(223,223,227)"></i><i class="blk" style="left:1046px;top:662px;width:8px;height:8px;background:rgb(226,226,226)"></i><i class="blk" style="left:1054px;top:662px;width:8px;height:8px;background:rgb(215,215,215)"></i><i class="blk" style="left:1062px;top:662px;width:8px;height:8px;background:rgb(216,216,218)"></i><i class="blk" style="left:1070px;top:662px;width:8px;height:8px;background:rgb(232,232,232)"></i><i class="blk" style="left:1078px;top:662px;width:8px;height:8px;background:rgb(216,216,220)"></i><i class="blk" style="left:1030px;top:670px;width:8px;height:8px;background:rgb(249,249,249)"></i><i class="blk" style="left:1038px;top:670px;width:8px;height:8px;background:rgb(235,235,235)"></i><i class="blk" style="left:1046px;top:670px;width:8px;height:8px;background:rgb(255,255,255)"></i><i class="blk" style="left:1054px;top:670px;width:8px;height:8px;background:rgb(239,239,243)"></i><i class="blk" style="left:1062px;top:670px;width:8px;height:8px;background:rgb(241,241,241)"></i><i class="blk" style="left:1070px;top:670px;width:8px;height:8px;background:rgb(250,250,250)"></i><i class="blk" style="left:1078px;top:670px;width:8px;height:8px;background:rgb(236,236,238)"></i><i class="blk" style="left:1086px;top:670px;width:8px;height:8px;background:rgb(248,248,250)"></i><i class="blk" style="left:1094px;top:670px;width:8px;height:8px;background:rgb(238,238,240)"></i><i class="blk" style="left:1030px;top:678px;width:8px;height:8px;background:rgb(240,240,244)"></i><i class="blk" style="left:1038px;top:678px;width:8px;height:8px;background:rgb(224,224,228)"></i><i class="blk" style="left:1046px;top:678px;width:8px;height:8px;background:rgb(225,225,227)"></i><i class="blk" style="left:1054px;top:678px;width:8px;height:8px;background:rgb(234,234,234)"></i><i class="blk" style="left:1062px;top:678px;width:8px;height:8px;background:rgb(228,228,228)"></i><i class="blk" style="left:1070px;top:678px;width:8px;height:8px;background:rgb(225,225,229)"></i><i class="blk" style="left:1078px;top:678px;width:8px;height:8px;background:rgb(224,224,226)"></i><i class="blk" style="left:1086px;top:678px;width:8px;height:8px;background:rgb(235,235,239)"></i><i class="blk" style="left:1094px;top:678px;width:8px;height:8px;background:rgb(224,224,226)"></i></div>
<span class="t" style="left:305.0px;top:831.85px;font-size:14px;color:#333;font-weight:400;letter-spacing:0.124px;">Música</span>
<span class="t" style="left:481.0px;top:831.85px;font-size:14px;color:#333;font-weight:400;letter-spacing:-0.029px;">Mis Datos</span>
<span class="t" style="left:669.5px;top:831.85px;font-size:14px;color:#333;font-weight:400;letter-spacing:-2.557px;">AN BUTES</span>
<span class="t" style="left:856.7px;top:831.85px;font-size:14px;color:#333;font-weight:400;letter-spacing:-0.325px;">Pictures</span>
<span class="t" style="left:1011.0px;top:831.85px;font-size:14px;color:#333;font-weight:400;letter-spacing:-0.068px;">OS Virtualizados</span>
<div id="sb"><svg class="abs" style="left:4px;top:6px" width="9" height="5" viewBox="0 0 9 5"><path d="M0 5L4.500 0 9 5Z" fill="#a3a3a3"/></svg><svg class="abs" style="left:4px;top:736px" width="9" height="5" viewBox="0 0 9 5"><path d="M0 0L4.500 5 9 0Z" fill="#505050"/></svg></div>
<div id="thumb"></div>
<div id="status"></div>
<span class="t" style="left:3.5px;top:820.54px;font-size:12px;color:#777;font-weight:400;letter-spacing:-0.178px;">Esperando a client-s.gateway.messenger.live.com...</span>
</body></html>
